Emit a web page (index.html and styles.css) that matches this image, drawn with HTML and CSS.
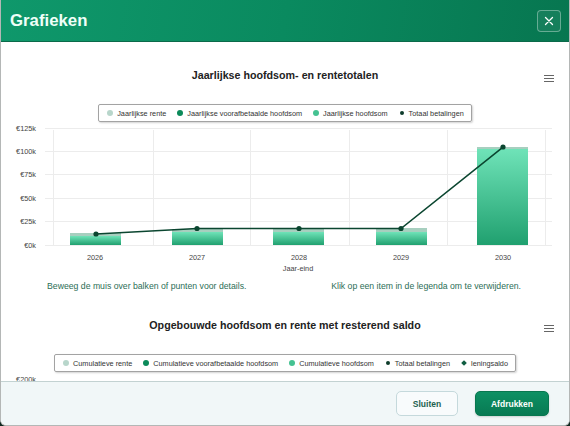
FILE: index.html
```html
<!DOCTYPE html>
<html lang="nl">
<head>
    <meta charset="UTF-8">
    <meta name="viewport" content="width=device-width, initial-scale=1.0">
    <title>Grafieken</title>
    <link rel="stylesheet" href="styles.css">
</head>
<body>
    <div class="modal">
        <div class="modal-header">
            <h2>Grafieken</h2>
            <button class="close-btn" aria-label="Sluiten">
                <svg width="10" height="10" viewBox="0 0 10 10"><path d="M1.5 1.5L8.5 8.5M8.5 1.5L1.5 8.5" stroke="#fff" stroke-width="1.3" stroke-linecap="round"/></svg>
            </button>
        </div>

        <div class="modal-body">
            <!-- Grafiek 1 -->
            <div class="chart">
                <h3 class="chart-title">Jaarlijkse hoofdsom- en rentetotalen</h3>
                <span class="chart-menu"><i></i><i></i><i></i></span>
                <div class="legend-wrap">
                    <div class="legend">
                        <span class="item"><b class="dot rente"></b>Jaarlijkse rente</span>
                        <span class="item"><b class="dot vooraf"></b>Jaarlijkse vooraf­betaalde hoofdsom</span>
                        <span class="item"><b class="dot hoofd"></b>Jaarlijkse hoofdsom</span>
                        <span class="item"><b class="dot small totaal"></b>Totaal betalingen</span>
                    </div>
                </div>
                <svg class="plot" width="568" height="152" viewBox="1 123 568 152">
                    <defs>
                        <linearGradient id="barGrad" x1="0" y1="0" x2="0" y2="1">
                            <stop offset="0" stop-color="#6fe3b8"/>
                            <stop offset="1" stop-color="#20a06f"/>
                        </linearGradient>
                    </defs>
                    <g stroke="#ececec" stroke-width="1">
                        <line x1="45" y1="129.5" x2="552" y2="129.5"/>
                        <line x1="45" y1="152.5" x2="552" y2="152.5"/>
                        <line x1="45" y1="175.5" x2="552" y2="175.5"/>
                        <line x1="45" y1="199.5" x2="552" y2="199.5"/>
                        <line x1="45" y1="222.5" x2="552" y2="222.5"/>
                        <line x1="45" y1="246.5" x2="552" y2="246.5"/>
                        <line x1="53.5" y1="131" x2="53.5" y2="246"/>
                        <line x1="153.5" y1="131" x2="153.5" y2="246"/>
                        <line x1="250.5" y1="131" x2="250.5" y2="246"/>
                        <line x1="349.5" y1="131" x2="349.5" y2="246"/>
                        <line x1="447.5" y1="131" x2="447.5" y2="246"/>
                        <line x1="545.5" y1="131" x2="545.5" y2="246"/>
                    </g>
                    <g class="axis-label" text-anchor="end">
                        <text x="36" y="132">€125k</text>
                        <text x="36" y="155">€100k</text>
                        <text x="36" y="178">€75k</text>
                        <text x="36" y="202">€50k</text>
                        <text x="36" y="225">€25k</text>
                        <text x="36" y="249">€0k</text>
                    </g>
                    <!-- balken: hoofdsom + rente -->
                    <g>
                        <rect x="70" y="237" width="51" height="9" fill="url(#barGrad)"/>
                        <rect x="70" y="234" width="51" height="3" fill="#a7cfbf"/>
                        <rect x="172" y="233" width="51" height="13" fill="url(#barGrad)"/>
                        <rect x="172" y="230" width="51" height="3" fill="#a7cfbf"/>
                        <rect x="273" y="233" width="51" height="13" fill="url(#barGrad)"/>
                        <rect x="273" y="230" width="51" height="3" fill="#a7cfbf"/>
                        <rect x="376" y="233" width="51" height="13" fill="url(#barGrad)"/>
                        <rect x="376" y="229" width="51" height="4" fill="#a7cfbf"/>
                        <rect x="477" y="150" width="51" height="96" fill="url(#barGrad)"/>
                        <rect x="477" y="148" width="51" height="2" fill="#a7cfbf"/>
                    </g>
                    <polyline points="96,235 197,229.5 299,229.5 401,229.5 503,148" fill="none" stroke="#0b4630" stroke-width="1.6"/>
                    <g fill="#0b4630">
                        <circle cx="96" cy="235" r="2.6"/>
                        <circle cx="197" cy="229.5" r="2.6"/>
                        <circle cx="299" cy="229.5" r="2.6"/>
                        <circle cx="401" cy="229.5" r="2.6"/>
                        <circle cx="503" cy="148" r="2.6"/>
                    </g>
                    <g class="axis-label" text-anchor="middle">
                        <text x="95" y="261">2026</text>
                        <text x="197" y="261">2027</text>
                        <text x="299" y="261">2028</text>
                        <text x="401" y="261">2029</text>
                        <text x="503" y="261">2030</text>
                        <text x="298" y="272">Jaar-eind</text>
                    </g>
                </svg>
                <div class="chart-notes">
                    <span>Beweeg de muis over balken of punten voor details.</span>
                    <span>Klik op een item in de legenda om te verwijderen.</span>
                </div>
            </div>

            <!-- Grafiek 2 -->
            <div class="chart">
                <h3 class="chart-title">Opgebouwde hoofdsom en rente met resterend saldo</h3>
                <span class="chart-menu"><i></i><i></i><i></i></span>
                <div class="legend-wrap">
                    <div class="legend">
                        <span class="item"><b class="dot rente"></b>Cumulatieve rente</span>
                        <span class="item"><b class="dot vooraf"></b>Cumulatieve vooraf­betaalde hoofdsom</span>
                        <span class="item"><b class="dot hoofd"></b>Cumulatieve hoofdsom</span>
                        <span class="item"><b class="dot small totaal"></b>Totaal betalingen</span>
                        <span class="item"><b class="dot small saldo"></b>leningsaldo</span>
                    </div>
                </div>
                <svg class="plot" width="568" height="152" viewBox="1 373 568 152">
                    <g class="axis-label" text-anchor="end">
                        <text x="36" y="383">€200k</text>
                    </g>
                </svg>
            </div>
        </div>

        <div class="modal-footer">
            <button class="btn btn-light">Sluiten</button>
            <button class="btn btn-primary">Afdrukken</button>
        </div>
    </div>
</body>
</html>
```

FILE: styles.css
```css
* {
    box-sizing: border-box;
}

body {
    margin: 0;
    padding: 0;
    background-color: #10291f;
    font-family: "Liberation Sans", Arial, sans-serif;
}

.modal {
    width: 570px;
    height: 426px;
    display: flex;
    flex-direction: column;
    background: #ffffff;
    border: 1px solid #b4b7b6;
    border-top: none;
    border-radius: 0 0 6px 6px;
    overflow: hidden;
}

.modal-header {
    height: 42px;
    flex-shrink: 0;
    display: flex;
    align-items: center;
    justify-content: space-between;
    padding: 0 8px 0 9px;
    background: linear-gradient(100deg, #0f986b 0%, #0a8a5f 50%, #077650 100%);
    border-bottom: 1px solid #0b6a4a;
}

.modal-header h2 {
    margin: 0;
    font-size: 16.8px;
    font-weight: bold;
    color: #effff8;
}

.close-btn {
    width: 24px;
    height: 22px;
    padding: 0;
    display: flex;
    align-items: center;
    justify-content: center;
    background: rgba(255, 255, 255, 0.06);
    border: 1px solid rgba(255, 255, 255, 0.35);
    border-radius: 4px;
    cursor: pointer;
}

.modal-body {
    flex: 1;
    overflow: hidden;
    background: #ffffff;
}

.chart {
    position: relative;
}

.chart-title {
    margin: 0;
    padding-top: 25px;
    line-height: 16px;
    font-size: 10.7px;
    font-weight: bold;
    text-align: center;
    color: #222222;
}

.chart-menu {
    position: absolute;
    right: 15px;
    top: 33px;
    width: 10px;
    display: flex;
    flex-direction: column;
    gap: 1.7px;
}

.chart-menu i {
    display: block;
    height: 1.3px;
    background: #666666;
}

.legend-wrap {
    display: flex;
    justify-content: center;
    margin-top: 21px;
}

.legend {
    display: inline-flex;
    align-items: center;
    gap: 11px;
    height: 18px;
    padding: 0 7px 0 8px;
    border: 1px solid #a3a3a3;
    border-radius: 2px;
    box-shadow: 1px 1px 2px rgba(0, 0, 0, 0.18);
    font-size: 7.3px;
    color: #333333;
    white-space: nowrap;
}

.legend .item {
    display: inline-flex;
    align-items: center;
    gap: 4px;
}

.dot {
    display: inline-block;
    width: 6px;
    height: 6px;
    border-radius: 50%;
}

.dot.small {
    width: 4px;
    height: 4px;
    margin: 0 1px;
}

.dot.rente { background: #b8d6cb; }
.dot.vooraf { background: #0c8a5a; }
.dot.hoofd { background: #45c292; }
.dot.totaal { background: #0d3b2b; }
.dot.saldo { background: #0f5d41; transform: rotate(45deg); border-radius: 0; }

.plot {
    display: block;
}

.axis-label {
    font-family: "Liberation Sans", Arial, sans-serif;
    font-size: 7.3px;
    fill: #444444;
}

.chart-notes {
    display: flex;
    justify-content: space-between;
    margin-top: 6px;
    padding: 0 48px 0 46px;
    line-height: 12px;
    font-size: 8.7px;
    color: #2c6e56;
}

.modal-footer {
    height: 44px;
    flex-shrink: 0;
    display: flex;
    align-items: center;
    justify-content: flex-end;
    gap: 17px;
    padding-right: 20px;
    background: #f1f7f8;
    border-top: 1px solid #c3d2d2;
}

.btn {
    height: 25px;
    border-radius: 5px;
    font-family: "Liberation Sans", Arial, sans-serif;
    font-size: 8.5px;
    font-weight: bold;
    cursor: pointer;
}

.btn-light {
    width: 62px;
    background: #f8fbfc;
    border: 1px solid #c5d9dc;
    color: #22604f;
}

.btn-primary {
    width: 74px;
    background: linear-gradient(180deg, #0d9063, #087a53);
    border: 1px solid #08774f;
    color: #ffffff;
    box-shadow: 0 1px 2px rgba(0, 0, 0, 0.15);
}
```
